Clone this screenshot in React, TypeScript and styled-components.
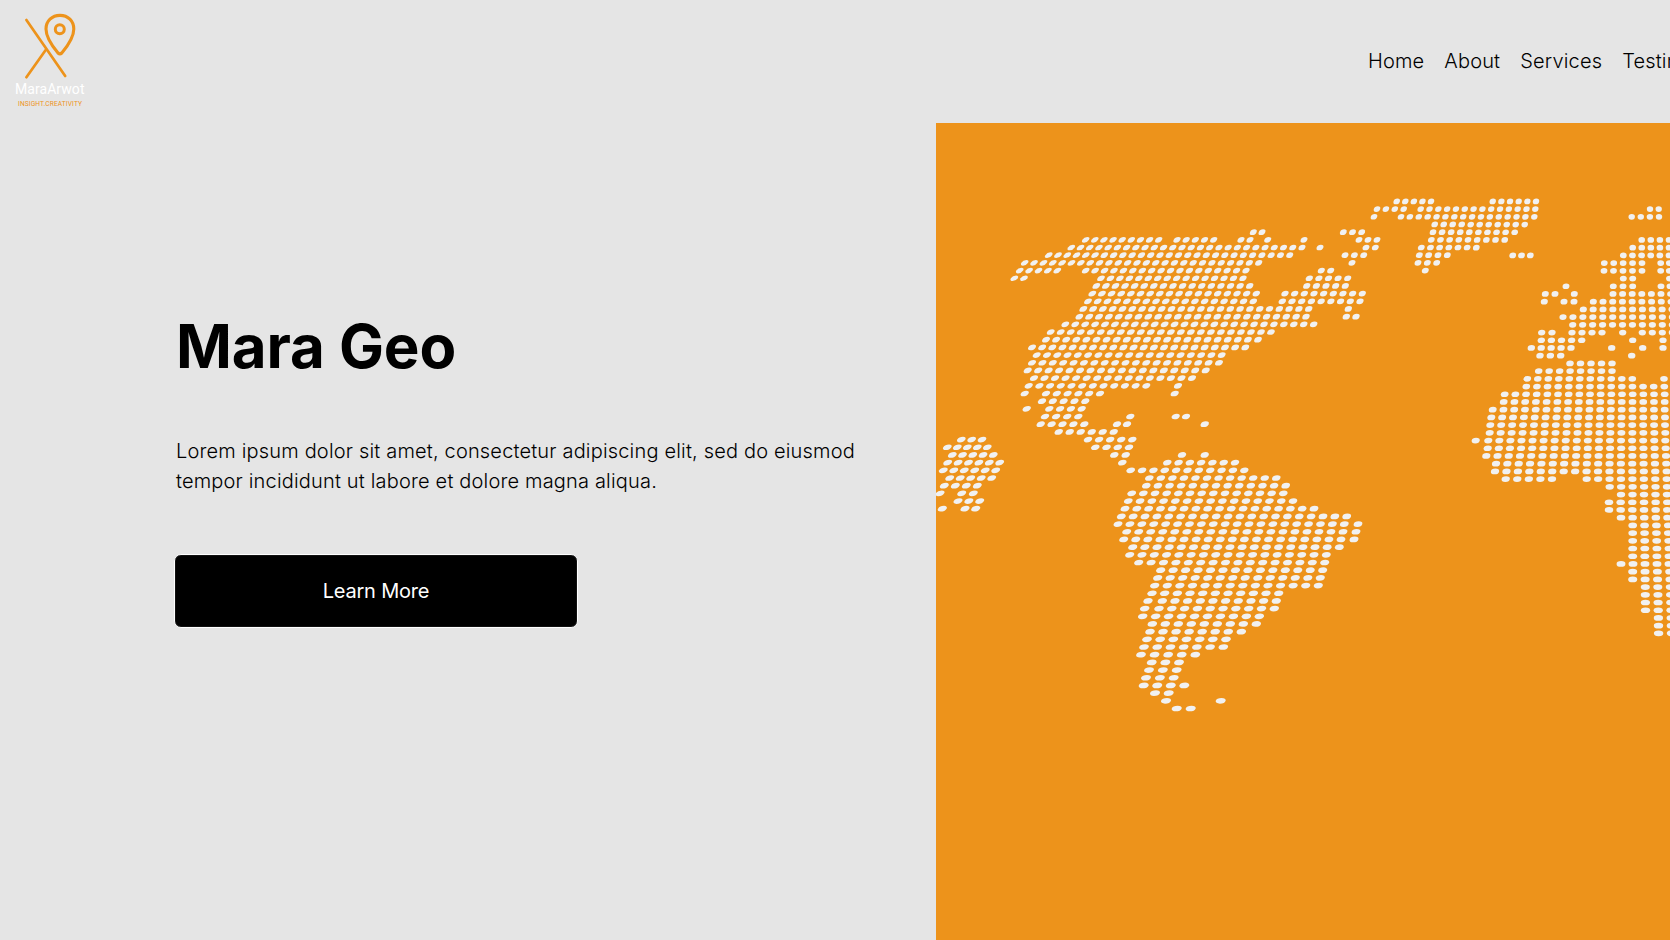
import React from "react";
import styled, { createGlobalStyle } from "styled-components";

const GlobalStyle = createGlobalStyle`
  * { box-sizing: border-box; }
  body {
    margin: 0;
    background: #e5e5e5;
    font-family: Inter, "Liberation Sans", sans-serif;
    overflow: hidden;
  }
`;

const Page = styled.div`
  display: flex;
  flex-direction: column;
  width: 100vw;
  height: 100vh;
  overflow: hidden;
  color: #000;
`;

const Header = styled.header`
  display: flex;
  align-items: center;
  flex: 0 0 123px;
  overflow: hidden;
`;

const LogoLink = styled.a`
  display: block;
  flex: none;
  width: 120px;
  height: 123px;
`;

const Nav = styled.nav`
  display: flex;
  flex: none;
  gap: 20px;
  margin-left: 1248px;
  padding-bottom: 2px;
`;

const NavLink = styled.a`
  font-size: 20px;
  font-weight: 300;
  line-height: 30px;
  letter-spacing: 0.16px;
  white-space: nowrap;
`;

const Hero = styled.main`
  display: grid;
  grid-template-columns: 936px 1fr;
  flex: 1;
  min-height: 0;
`;

const Intro = styled.section`
  display: flex;
  flex-direction: column;
  align-items: flex-start;
  padding: 187px 0 0 174px;
`;

const Title = styled.h1`
  margin: 0 0 0 2px;
  font-size: 60px;
  font-weight: 700;
  line-height: 72px;
  letter-spacing: -0.1px;
`;

const Lead = styled.p`
  width: 700px;
  margin: 54px 0 0 2px;
  font-size: 20px;
  font-weight: 300;
  line-height: 30px;
  letter-spacing: 0.175px;
`;

const Button = styled.button`
  width: 404px;
  height: 74px;
  margin-top: 58px;
  padding: 0;
  border: 1px solid #fff;
  border-radius: 7px;
  background: #000;
  box-shadow: inset 0 0 0 1px #121212;
  color: #fff;
  font: 400 20px Inter, "Liberation Sans", sans-serif;
  letter-spacing: -0.2px;
`;

const MapPanel = styled.section`
  background: #ed931b;
  overflow: hidden;
`;

const MapSvg = styled.svg`
  display: block;
`;

type Run = [start: number, end: number, count: number];

/* Each entry is one latitude row; a run is first x, last x and number of dots. */
const rows: Run[][] = [
  [[1396.7, 1431, 5], [1492.7, 1536, 6]],
  [[1377, 1403.7, 4], [1420.7, 1535.3, 14], [1650, 1658.7, 2]],
  [[1374, 1374, 1], [1401, 1534.3, 16], [1631.7, 1659, 4]],
  [[1434.7, 1524.7, 11]],
  [[1253.3, 1262, 2], [1343.3, 1361.7, 3], [1433, 1514.7, 10]],
  [[1085.7, 1158.7, 9], [1177, 1213.7, 5], [1241, 1250, 2], [1267.7, 1267.7, 1], [1304, 1304, 1], [1359, 1377, 3], [1431.3, 1504.7, 9], [1641.7, 1669, 4]],
  [[1071.3, 1302, 26], [1320, 1320, 1], [1366, 1375.3, 2], [1421.3, 1476.3, 7], [1632.7, 1669, 5]],
  [[1048.7, 1289.7, 27], [1345, 1363.7, 3], [1419.3, 1447.3, 4], [1512.7, 1530.3, 3], [1623.3, 1669, 6]],
  [[1024.7, 1258.7, 26], [1352, 1352, 1], [1418, 1436.7, 3], [1604.3, 1642, 5], [1660.7, 1669.3, 2]],
  [[1019.7, 1057.3, 5], [1085.7, 1246, 18], [1321.3, 1330.7, 2], [1425.3, 1425.3, 1], [1604, 1642, 5], [1660.7, 1669.3, 2]],
  [[1014.3, 1024, 2], [1101, 1243, 16], [1309.3, 1347.7, 5], [1623.3, 1632.7, 2], [1669.5, 1669.5, 1]],
  [[1096.3, 1249.7, 17], [1306.7, 1345.3, 5], [1566, 1566, 1], [1613.3, 1632.7, 3], [1661, 1670, 2]],
  [[1092.3, 1256.3, 18], [1285, 1362.3, 9], [1545.3, 1555, 2], [1574.3, 1574.3, 1], [1613, 1670.6, 7]],
  [[1088, 1253.3, 18], [1282.3, 1360, 9], [1544.3, 1544.3, 1], [1564, 1574, 2], [1593.3, 1671, 9]],
  [[1083.3, 1308.7, 24], [1348.3, 1348.3, 1], [1583.3, 1672, 10]],
  [[1079.3, 1306, 24], [1346.3, 1356, 2], [1563, 1672.3, 12]],
  [[1065.3, 1313.7, 26], [1572.7, 1672.3, 11]],
  [[1050.7, 1271, 23], [1541.7, 1552, 2], [1572, 1602, 4], [1622.7, 1622.7, 1], [1642.3, 1672.3, 4]],
  [[1046, 1258, 22], [1541.3, 1581.7, 5], [1632.7, 1632.7, 1], [1663, 1663, 1]],
  [[1032, 1245.3, 22], [1531.3, 1571, 5], [1611.7, 1611.7, 1], [1642.7, 1642.7, 1], [1663, 1663, 1]],
  [[1036.7, 1221.7, 19], [1540, 1560.7, 3], [1631.7, 1631.7, 1]],
  [[1032, 1219, 19], [1570, 1612, 5]],
  [[1027.7, 1205.7, 18], [1538.7, 1612, 8]],
  [[1034, 1192, 16], [1527.3, 1632.3, 11], [1664, 1664, 1]],
  [[1028.7, 1146.3, 12], [1178, 1178, 1], [1526.3, 1664.3, 14]],
  [[1024.7, 1024.7, 1], [1046, 1100, 6], [1174.7, 1174.7, 1], [1504.7, 1664.7, 16]],
  [[1042, 1085.3, 5], [1503.7, 1664.7, 16]],
  [[1026.7, 1026.7, 1], [1049.3, 1081.7, 4], [1492.7, 1664.7, 17]],
  [[1045, 1078.3, 4], [1130.3, 1130.3, 1], [1175.7, 1186, 2], [1491.3, 1665, 17]],
  [[1040.7, 1084.3, 5], [1117, 1127, 2], [1204.7, 1204.7, 1], [1490.3, 1665, 17]],
  [[1058.7, 1113.7, 6], [1489.7, 1665.3, 17]],
  [[961.3, 982, 3], [1088, 1132.3, 5], [1475.7, 1475.7, 1], [1488.3, 1665.3, 17]],
  [[947.3, 987.3, 5], [1095.3, 1129, 4], [1487.7, 1665.7, 17]],
  [[952.3, 993.3, 5], [1114.3, 1125.7, 2], [1182, 1182, 1], [1204.7, 1204.7, 1], [1486.3, 1666, 17]],
  [[947.7, 999.7, 6], [1122.3, 1122.3, 1], [1167.3, 1235, 7], [1496, 1666.3, 16]],
  [[943.3, 995.7, 6], [1130.7, 1244.3, 11], [1495, 1666.7, 16]],
  [[949.7, 991.7, 5], [1149.3, 1276.3, 12], [1505.7, 1552, 5], [1586.7, 1666.7, 8]],
  [[944.3, 977.3, 4], [1146.3, 1285.7, 13], [1609.7, 1667, 6]],
  [[940, 940, 1], [961.7, 973.3, 2], [1131.7, 1283.3, 14], [1621, 1667, 5]],
  [[958, 979.7, 3], [1128.3, 1293, 15], [1609, 1667.3, 6]],
  [[942.3, 942.3, 1], [965, 975.7, 2], [1125, 1314, 17], [1609, 1667.3, 6]],
  [[1121.3, 1346.7, 20], [1621, 1667.5, 5]],
  [[1118, 1344.3, 20], [1358, 1358, 1], [1632.7, 1668.3, 4]],
  [[1126.7, 1343, 19], [1356, 1356, 1], [1632.7, 1668.3, 4]],
  [[1123.7, 1341, 19], [1354, 1354, 1], [1632.7, 1668.7, 4]],
  [[1132.7, 1339.3, 18], [1632.7, 1669, 4]],
  [[1129.7, 1326.3, 17], [1632.7, 1669, 4]],
  [[1138.7, 1324.7, 16], [1621, 1669, 5]],
  [[1160.7, 1322.7, 14], [1632.7, 1669.7, 4]],
  [[1157.7, 1320.3, 14], [1632.7, 1670, 4]],
  [[1154.7, 1318.3, 14], [1645.3, 1670.3, 3]],
  [[1152, 1278.7, 11], [1645.3, 1670.6, 3]],
  [[1148, 1148, 1], [1162.3, 1276.3, 10], [1645.4, 1670.8, 3]],
  [[1144.7, 1144.7, 1], [1159, 1274.3, 10], [1645.5, 1671, 3]],
  [[1142.7, 1259.3, 10], [1658.4, 1671.2, 2]],
  [[1152.3, 1256.3, 9], [1658.5, 1671.4, 2]],
  [[1150, 1241.3, 8], [1658.6, 1671.5, 2]],
  [[1147, 1226, 7]],
  [[1144, 1223.3, 7]],
  [[1141, 1195.3, 5]],
  [[1151.7, 1179, 3]],
  [[1149, 1176.7, 3]],
  [[1146, 1173.7, 3]],
  [[1143.7, 1184.3, 4]],
  [[1155, 1168.7, 2]],
  [[1166, 1166, 1], [1220.7, 1220.7, 1]],
  [[1176.7, 1190.7, 2]],
];

const FIRST_ROW_Y = 201.4;
const ROW_STEP = 7.683;
const CENTRAL_MERIDIAN = 1655;

function WorldMap() {
  const dots = rows.flatMap((runs, row) =>
    runs.flatMap(([start, end, count]) =>
      Array.from({ length: count }, (_, i) => {
        const x = count === 1 ? start : start + ((end - start) * i) / (count - 1);
        const base = FIRST_ROW_Y + row * ROW_STEP;
        const y = x > 1470 ? base + (base - 200) * 0.004 : base;
        const lean = -(CENTRAL_MERIDIAN - x) * 0.00095 * (1 - (y - 300) * 0.0006);
        return (
          <ellipse
            key={`${row}-${start}-${i}`}
            rx={3.15 + (y - 201) * 0.0036}
            ry={2.85}
            transform={`matrix(1 0 ${lean.toFixed(3)} 1 ${x.toFixed(2)} ${y.toFixed(2)})`}
          />
        );
      })
    )
  );
  return (
    <MapSvg width="734" height="817" viewBox="936 123 734 817" fill="#f1f1f1" aria-hidden="true">
      {dots}
    </MapSvg>
  );
}

function Logo() {
  return (
    <svg width="120" height="120" viewBox="0 0 120 120" role="img" aria-label="MaraArwot">
      <g fill="none" stroke="#ed931b" strokeWidth="2.7" strokeLinecap="round" strokeLinejoin="round">
        <path d="M26.4 20 L65.2 76" />
        <path d="M26.4 77.2 L45.7 50" />
        <path
          strokeWidth="3.1"
          d="M58 53 C53.8 48 46 37.5 46 29 C46 21 52 15.4 60 15.4 C68 15.4 73.8 21 73.8 29 C73.8 37.5 66 48 61.8 53 Q59.9 54.8 58 53 Z"
        />
        <circle cx="59.8" cy="29.2" r="4.5" strokeWidth="3" />
      </g>
      <text x="15" y="94.4" fill="#fff" fontFamily="Roboto, sans-serif" fontSize="14" fontWeight="400" textLength="69.5">
        MaraArwot
      </text>
      <text x="18" y="106.2" fill="#ed931b" fontFamily="Roboto, sans-serif" fontSize="6.6" textLength="64">
        INSIGHT.CREATIVITY
      </text>
    </svg>
  );
}

export default function App() {
  return (
    <Page>
      <GlobalStyle />
      <Header>
        <LogoLink>
          <Logo />
        </LogoLink>
        <Nav>
          <NavLink>Home</NavLink>
          <NavLink>About</NavLink>
          <NavLink>Services</NavLink>
          <NavLink>Testimonials</NavLink>
        </Nav>
      </Header>
      <Hero>
        <Intro>
          <Title>Mara Geo</Title>
          <Lead>
            Lorem ipsum dolor sit amet, consectetur adipiscing elit, sed do eiusmod tempor incididunt ut
            labore et dolore magna aliqua.
          </Lead>
          <Button>Learn More</Button>
        </Intro>
        <MapPanel>
          <WorldMap />
        </MapPanel>
      </Hero>
    </Page>
  );
}
